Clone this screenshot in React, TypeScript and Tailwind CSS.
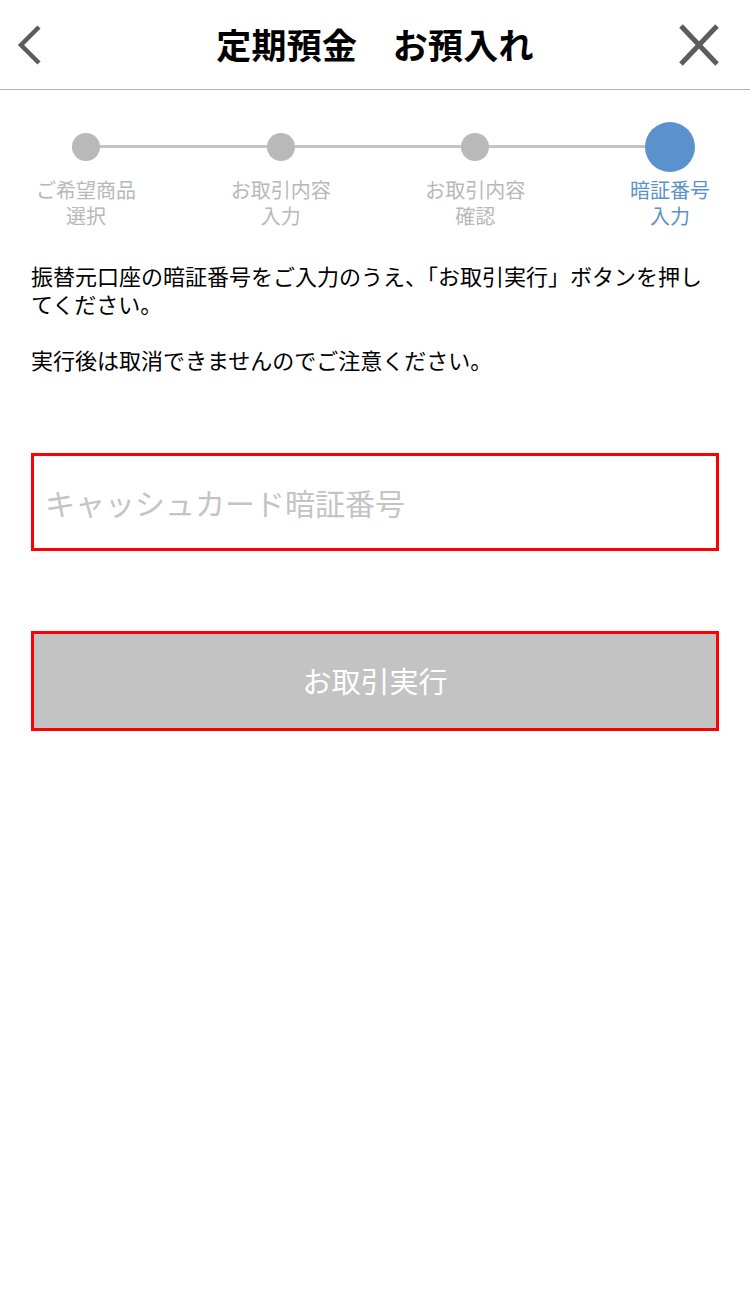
const steps = [
  { label: ["ご希望商品", "選択"], active: false },
  { label: ["お取引内容", "入力"], active: false },
  { label: ["お取引内容", "確認"], active: false },
  { label: ["暗証番号", "入力"], active: true },
];

export default function App() {
  return (
    <div className="min-h-[1295px] w-[750px] bg-white font-['Noto_Sans_CJK_JP','Noto_Sans',sans-serif] text-black">
      {/* header */}
      <div className="grid h-[90px] grid-cols-[1fr_auto_1fr] items-center border-b border-[#b4b4b4] px-[14px]">
        <svg width="32" height="42" viewBox="0 0 32 42" fill="none">
          <path d="M25 3 L7 21 L25 39" stroke="#5c5c5c" strokeWidth="4.5" />
        </svg>
        <div className="text-[35px] font-bold tracking-[0.3px]">定期預金　お預入れ</div>
        <svg className="mr-[16px] justify-self-end" width="42" height="42" viewBox="0 0 42 42" fill="none">
          <path d="M3 2 L39 40 M39 2 L3 40" stroke="#5c5c5c" strokeWidth="5" />
        </svg>
      </div>

      {/* stepper */}
      <div className="relative mt-[32px] flex justify-between pl-[31px] pr-[25px]">
        <div className="absolute left-[86px] right-[80px] top-[23px] h-[3px] bg-[#c4c4c4]" />
        {steps.map((s, i) => (
          <div key={i} className="relative flex w-[110px] flex-col items-center">
            <div className="flex h-[50px] items-center justify-center">
              {s.active ? (
                <div className="h-[50px] w-[50px] rounded-full bg-[#5b91cc]" />
              ) : (
                <div className="h-[28px] w-[28px] rounded-full bg-[#b9b9b9]" />
              )}
            </div>
            <div
              className={
                "mt-[5px] text-center text-[20px] leading-[26px] " +
                (s.active ? "text-[#5b91cc]" : "text-[#b8b8b8]")
              }
            >
              {s.label[0]}
              <br />
              {s.label[1]}
            </div>
          </div>
        ))}
      </div>

      {/* message */}
      <div className="mt-[32px] px-[31px] text-[22px] leading-[28px]">
        振替元口座の暗証番号をご入力のうえ、「お取引実行」ボタンを押してください。
        <br />
        <br />
        実行後は取消できませんのでご注意ください。
      </div>

      <div className="mt-[80px] px-[31px]">
        <input
          type="password"
          placeholder="キャッシュカード暗証番号"
          className="h-[98px] w-full border-[3px] border-[#ff0000] px-[11px] text-[30px] outline-none placeholder:text-[#c4c4c4]"
        />
        <button className="mt-[80px] flex h-[100px] w-full items-center justify-center border-[3px] border-[#ff0000] bg-[#c3c3c3] text-[29px] text-white">
          お取引実行
        </button>
      </div>
    </div>
  );
}
